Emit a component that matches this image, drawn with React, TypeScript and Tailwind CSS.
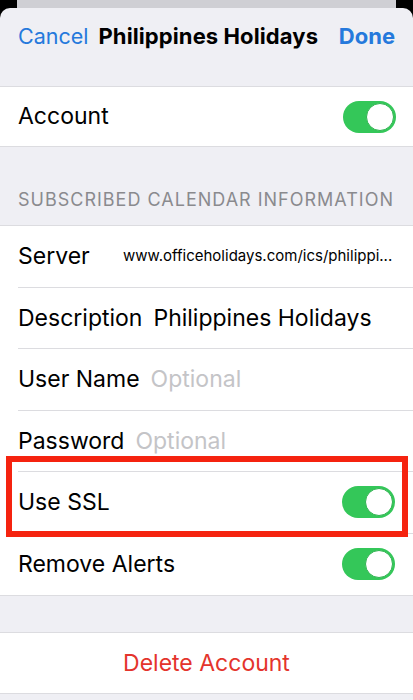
import React from "react";

const Toggle = () => (
  <div className="relative w-[53px] h-[32px] rounded-full bg-[#34c759] shrink-0">
    <div className="absolute right-[2px] top-[2px] w-[28px] h-[28px] rounded-full bg-white border border-[#2fb350]" />
  </div>
);

const Row = ({ children, last }: { children: React.ReactNode; last?: boolean }) => (
  <div className="pl-[18px] bg-white">
    <div
      className={
        "h-[61.5px] flex items-center pr-[18px] " +
        (last ? "" : "border-b border-[#dcdce0]")
      }
    >
      {children}
    </div>
  </div>
);

export default function App() {
  return (
    <div
      className="relative w-[413px] h-[700px] bg-black overflow-hidden text-black"
      style={{ fontFamily: "Inter, 'Liberation Sans', sans-serif" }}
    >
      {/* stacked sheet behind */}
      <div className="absolute left-[17px] right-[17px] top-0 h-[20px] bg-[#cfcfd4]" />

      {/* main sheet */}
      <div className="absolute left-0 right-0 top-[8px] bottom-0 rounded-t-[10px] bg-[#efeff4]">
        {/* nav bar */}
        <div className="h-[56px] flex items-center px-[18px]">
          <span className="text-[21.5px] text-[#2579dc]">Cancel</span>
          <span className="ml-[10px] text-[22px] font-bold tracking-[0.1px]">Philippines Holidays</span>
          <span className="ml-auto text-[22px] font-bold text-[#2579dc]">Done</span>
        </div>

        <div className="h-[22px]" />

        {/* account */}
        <div className="bg-white border-y border-[#dcdce0] h-[61px] flex items-center justify-between pl-[18px] pr-[17px]">
          <span className="text-[23px]">Account</span>
          <Toggle />
        </div>

        {/* section header */}
        <div className="h-[78px] flex items-end pb-[12px] px-[18px]">
          <span className="text-[18px] text-[#8a8a8e] tracking-[1px] whitespace-nowrap">SUBSCRIBED CALENDAR INFORMATION</span>
        </div>

        <div className="border-y border-[#dcdce0]">
          <Row>
            <span className="text-[23px] w-[105px]">Server</span>
            <span className="text-[15px] whitespace-nowrap">www.officeholidays.com/ics/philippi...</span>
          </Row>
          <Row>
            <span className="text-[23px] mr-[11px]">Description</span>
            <span className="text-[23px]">Philippines Holidays</span>
          </Row>
          <Row>
            <span className="text-[23px] mr-[11px]">User Name</span>
            <span className="text-[23px] text-[#c4c4c7]">Optional</span>
          </Row>
          <Row>
            <span className="text-[23px] mr-[11px]">Password</span>
            <span className="text-[23px] text-[#c4c4c7]">Optional</span>
          </Row>
          <Row>
            <div className="flex-1 flex items-center justify-between">
              <span className="text-[23px]">Use SSL</span>
              <Toggle />
            </div>
          </Row>
          <Row last>
            <div className="flex-1 flex items-center justify-between">
              <span className="text-[23px]">Remove Alerts</span>
              <Toggle />
            </div>
          </Row>
        </div>

        <div className="h-[36px]" />

        <div className="bg-white border-y border-[#dcdce0] h-[62px] flex items-center justify-center">
          <span className="text-[23px] text-[#e4342c]">Delete Account</span>
        </div>
      </div>

      {/* red highlight box */}
      <div className="absolute left-[6px] top-[456px] w-[402px] h-[81px] border-[6px] border-[#f5230f]" />
    </div>
  );
}
